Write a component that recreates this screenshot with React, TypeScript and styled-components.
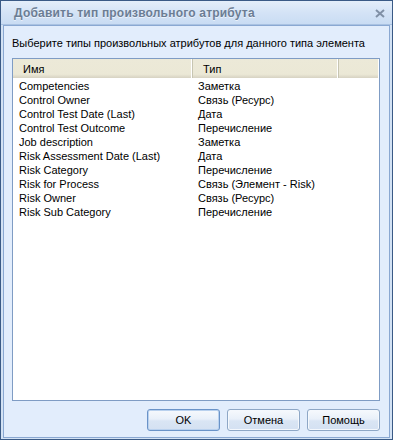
import styled, { createGlobalStyle } from 'styled-components'

const GlobalStyle = createGlobalStyle`
    html, body {
        margin: 0;
        padding: 0;
        background: #ffffff;
    }

    body {
        font-family: "Liberation Sans", Arial, sans-serif;
        font-size: 11px;
        color: #000000;
    }
`

const StyledWindow = styled.div`
    width: 393px;
    height: 440px;
    box-sizing: border-box;
    border: 1px solid #3a5a86;
    background: #d3e2f4;
    display: flex;
    flex-direction: column;
`

const TitleBar = styled.div`
    height: 23px;
    flex: none;
    display: flex;
    align-items: center;
    justify-content: space-between;
    padding: 0 6px 0 13px;
    background: linear-gradient(to bottom, #e4eefa 0%, #d4e3f6 50%, #c9dcf3 100%);
    border-bottom: 1px solid #a9c2e2;
`

const Title = styled.div`
    font-size: 12px;
    font-weight: bold;
    color: #6b7d94;
    letter-spacing: 0.2px;
    text-shadow: 0 1px 0 rgba(255, 255, 255, 0.6);
`

const CloseButton = styled.div`
    width: 12px;
    height: 12px;
    display: flex;
    align-items: center;
    justify-content: center;
    margin-top: 2px;
`

const Body = styled.div`
    flex: 1;
    margin: 0 2px 1px 2px;
    border: 1px solid #8aa8d2;
    background: #e2edfc;
    display: flex;
    flex-direction: column;
    padding: 0 9px 6px 8px;
`

const Prompt = styled.div`
    height: 31px;
    display: flex;
    align-items: center;
    padding-top: 1px;
`

const ListBox = styled.div`
    flex: 1;
    border: 1px solid #7f9cc4;
    background: #ffffff;
    display: flex;
    flex-direction: column;
`

const Header = styled.div`
    height: 19px;
    display: flex;
    background: linear-gradient(to bottom, #ece9d8 0%, #ebe8d6 80%, #d6d2c2 100%);
    margin-right: 1px;
`

const HeaderCell = styled.div<{ $width: number }>`
    width: ${(props) => props.$width}px;
    flex: none;
    box-sizing: border-box;
    display: flex;
    align-items: center;
    padding-left: 10px;
    border-right: 1px solid #c7c5b2;
    box-shadow: inset -1px 0 0 #ffffff;

    &:last-child {
        border-right: none;
        box-shadow: none;
    }
`

const Rows = styled.div`
    padding-top: 1px;
`

const Row = styled.div`
    height: 14px;
    display: flex;
    align-items: center;
`

const Cell = styled.div<{ $width: number }>`
    width: ${(props) => props.$width}px;
    flex: none;
    padding-left: 6px;
    box-sizing: border-box;
    white-space: nowrap;
`

const ButtonBar = styled.div`
    display: flex;
    justify-content: flex-end;
    gap: 7px;
    padding-top: 8px;
`

const Button = styled.button<{ $default?: boolean }>`
    width: 73px;
    height: 22px;
    font-family: "Liberation Sans", Arial, sans-serif;
    font-size: 11px;
    color: #000000;
    border: 1px solid ${(props) => (props.$default ? '#6a93c8' : '#8ea7c6')};
    border-radius: 3px;
    background: linear-gradient(to bottom, #f6f9fd 0%, #e9f0f9 45%, #d9e5f4 55%, #d4e1f2 100%);
    box-shadow: ${(props) => (props.$default ? 'inset 0 0 0 1px #b9d1ee' : 'inset 0 0 0 1px #f4f8fd')};
    padding: 0;
`

const attributes = [
    ['Competencies', 'Заметка'],
    ['Control Owner', 'Связь (Ресурс)'],
    ['Control Test Date (Last)', 'Дата'],
    ['Control Test Outcome', 'Перечисление'],
    ['Job description', 'Заметка'],
    ['Risk Assessment Date (Last)', 'Дата'],
    ['Risk Category', 'Перечисление'],
    ['Risk for Process', 'Связь (Элемент - Risk)'],
    ['Risk Owner', 'Связь (Ресурс)'],
    ['Risk Sub Category', 'Перечисление'],
]

const App = () => {
    return <>
        <GlobalStyle />
        <StyledWindow>
            <TitleBar>
                <Title>Добавить тип произвольного атрибута</Title>
                <CloseButton>
                    <svg width="10" height="9" viewBox="0 0 10 9">
                        <path d="M1 1 L9 8 M9 1 L1 8" stroke="#8090a6" strokeWidth="2" />
                    </svg>
                </CloseButton>
            </TitleBar>

            <Body>
                <Prompt>Выберите типы произвольных атрибутов для данного типа элемента</Prompt>

                <ListBox>
                    <Header>
                        <HeaderCell $width={180}>Имя</HeaderCell>
                        <HeaderCell $width={146}>Тип</HeaderCell>
                        <HeaderCell $width={40}></HeaderCell>
                    </Header>

                    <Rows>
                        {attributes.map(([name, type]) => (
                            <Row key={name}>
                                <Cell $width={179}>{name}</Cell>
                                <Cell $width={180}>{type}</Cell>
                            </Row>
                        ))}
                    </Rows>
                </ListBox>

                <ButtonBar>
                    <Button $default>OK</Button>
                    <Button>Отмена</Button>
                    <Button>Помощь</Button>
                </ButtonBar>
            </Body>
        </StyledWindow>
    </>
}

export default App
